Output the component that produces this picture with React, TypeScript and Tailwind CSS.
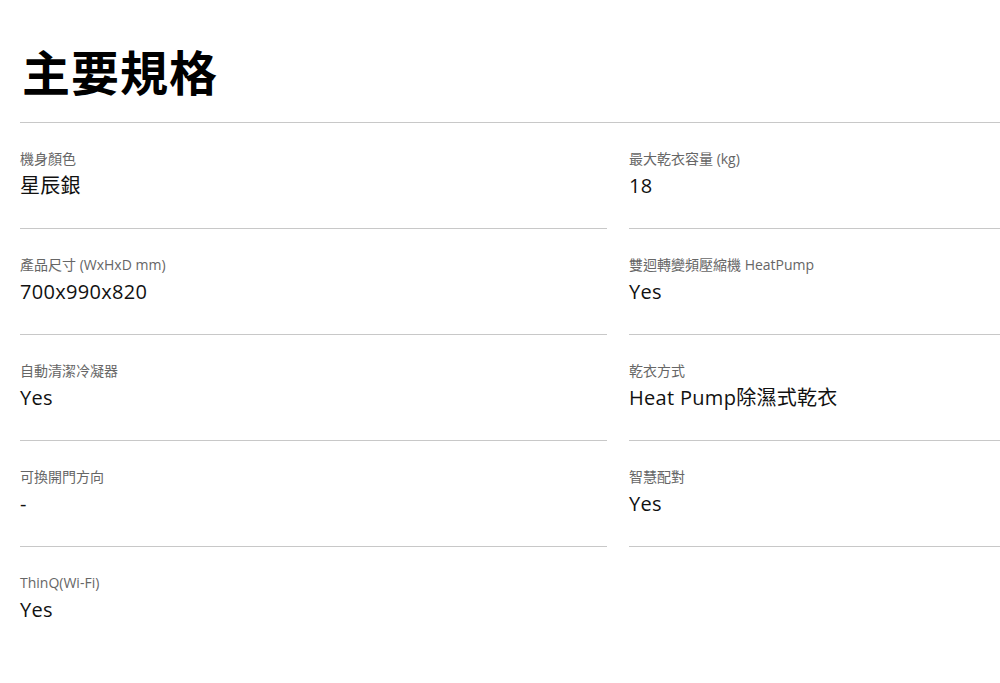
const specs: [string, string][] = [
  ['機身顏色', '星辰銀'],
  ['最大乾衣容量 (kg)', '18'],
  ['產品尺寸 (WxHxD mm)', '700x990x820'],
  ['雙迴轉變頻壓縮機 HeatPump', 'Yes'],
  ['自動清潔冷凝器', 'Yes'],
  ['乾衣方式', 'Heat Pump除濕式乾衣'],
  ['可換開門方向', '-'],
  ['智慧配對', 'Yes'],
  ['ThinQ(Wi-Fi)', 'Yes'],
]

export default function App() {
  return (
    <div
      className="w-full h-[683px] overflow-hidden bg-white pl-[20px]"
      style={{ fontFamily: '"Open Sans", "Noto Sans CJK TC", sans-serif' }}
    >
      <h1
        className="pt-[41px] pb-[23px] pl-[2px] text-[48px] leading-[58px] font-semibold tracking-[1px] text-black border-b border-[#c8c8c8] w-[1200px]"
        style={{ fontFamily: '"Noto Sans CJK TC", sans-serif' }}
      >
        主要規格
      </h1>
      <div className="grid grid-cols-[587px_587px] gap-x-[22px]">
        {specs.map(([label, value], i) => (
          <div
            key={label}
            className={`h-[106px] pt-[26px] ${i < 8 ? 'border-b border-[#c8c8c8]' : ''}`}
          >
            <div className="text-[14px] leading-[20px] text-[#666]">{label}</div>
            <div className="mt-[2px] text-[20px] leading-[30px] text-[#111] tracking-[0.3px]">{value}</div>
          </div>
        ))}
      </div>
    </div>
  )
}
